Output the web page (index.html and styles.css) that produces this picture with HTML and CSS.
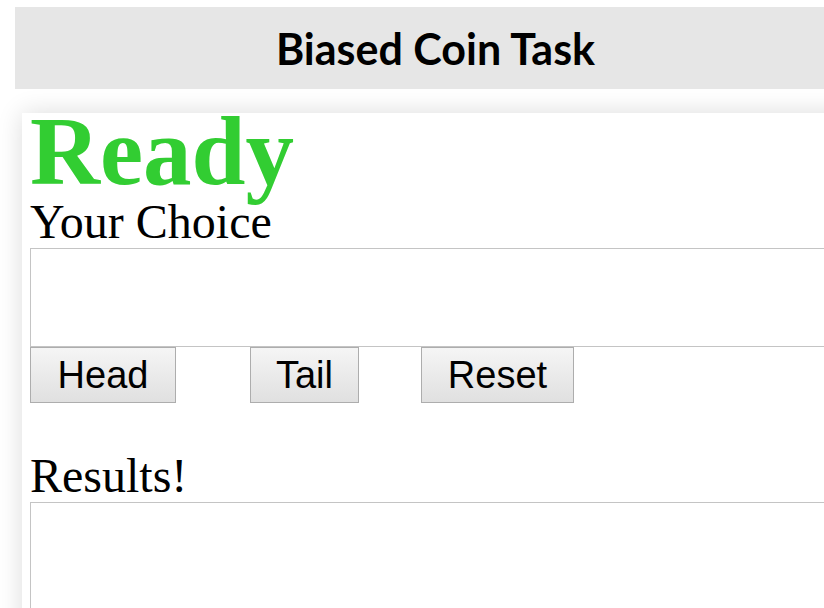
FILE: index.html
```html
<!DOCTYPE html>
<html lang="en">
<head>
<meta charset="utf-8">
<title>Biased Coin Task</title>
<link rel="stylesheet" href="styles.css">
</head>
<body>
  <header class="title-bar">
    <h1 class="title">Biased Coin Task</h1>
  </header>
  <main class="panel">
    <h2 class="status">Ready</h2>
    <div class="label">Your Choice</div>
    <textarea class="field field-choice" readonly></textarea>
    <div class="actions">
      <button class="btn btn-head" type="button">Head</button>
      <button class="btn btn-tail" type="button">Tail</button>
      <button class="btn btn-reset" type="button">Reset</button>
    </div>
    <div class="label label-results">Results!</div>
    <textarea class="field field-results" readonly></textarea>
  </main>
</body>
</html>
```
FILE: styles.css
```css
html, body {
  margin: 0;
  padding: 0;
  background: #ffffff;
  overflow: hidden;
  height: 100%;
}

body {
  padding-top: 7px;
}

/* grey strip with the task name */
.title-bar {
  margin-left: 15px;
  height: 82px;
  background: #e6e6e6;
  display: flex;
  align-items: center;
  justify-content: center;
  padding-left: 32px;
}

.title {
  margin: 0;
  font-family: "Lato", "Open Sans", sans-serif;
  font-weight: 700;
  font-size: 43px;
  line-height: 1;
  color: #000;
}

/* white work area with a soft shadow */
.panel {
  margin: 24px 0 0 22px;
  width: 1000px;
  height: 700px;
  padding-left: 8px;
  background: #fff;
  box-shadow: 0 0 24px rgba(0, 0, 0, 0.14);
  font-family: "Liberation Serif", "Times New Roman", serif;
}

.status {
  margin: 0;
  font-size: 97px;
  font-weight: 700;
  line-height: 78px;
  color: limegreen;
}

.label {
  margin-top: 4px;
  font-size: 48px;
  line-height: 53px;
  color: #000;
}

.label-results {
  margin-top: 47px;
  line-height: 52px;
}

.field {
  display: block;
  box-sizing: border-box;
  width: 980px;
  height: 99px;
  margin: 0;
  border: 1px solid #c4c4c4;
  background: #fff;
  resize: none;
  outline: none;
}

.field-results {
  height: 200px;
}

.actions {
  display: flex;
  height: 56px;
}

.btn {
  box-sizing: border-box;
  height: 56px;
  padding: 0;
  border: 1px solid #adadad;
  background: linear-gradient(#f5f5f5, #e0e0e0);
  font-family: "Liberation Sans", Arial, sans-serif;
  font-size: 38px;
  color: #000;
}

.btn-head {
  width: 146px;
  margin-right: 74px;
}

.btn-tail {
  width: 109px;
  margin-right: 62px;
}

.btn-reset {
  width: 153px;
}
```
